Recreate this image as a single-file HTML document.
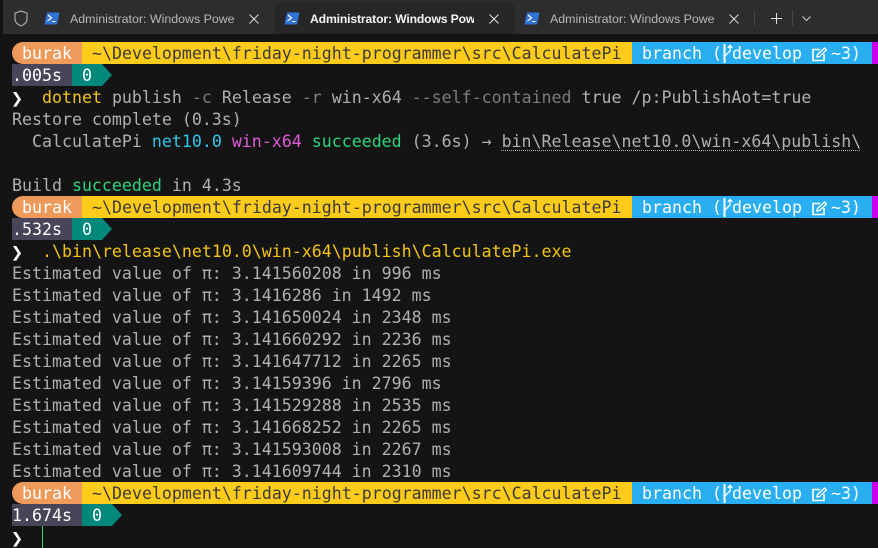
<!DOCTYPE html>
<html><head><meta charset="utf-8">
<style>
html,body{margin:0;padding:0;background:#141414}
#w{position:relative;width:878px;height:548px;overflow:hidden;background:#141414;font-family:"DejaVu Sans Mono","Liberation Mono",monospace;font-size:16.6px;color:#b0b0b0}
.bar{position:absolute;left:0;top:0;width:878px;height:34px;background:#2d2d2d}
.atab{position:absolute;left:275px;top:2px;width:240px;height:32px;background:#272727;border-radius:8px 8px 0 0}
.t{position:absolute;top:11px;height:18px;overflow:hidden;white-space:nowrap;font:12.4px/17px "Liberation Sans",sans-serif;color:#c4c4c4}
.r{position:absolute;height:22px;line-height:24px;white-space:pre}
.s{position:absolute;height:22px;line-height:24px;white-space:pre;overflow:hidden}
.or{background:#ee9a5a;color:#fff;left:12px;width:70px;border-radius:11px 0 0 11px}
.ye{background:#fdcc1a;color:#3c3a3a;left:82px;width:550px}
.bl{background:#29aef2;color:#fff;left:632px;width:240px}
.ma{background:#cc00ee;left:872px;width:6px}
.ti{background:#4a4458;color:#fff;left:12px}
.p{color:#fff;font-weight:bold;font-size:20px;left:11px}
.g{color:#f4c414}.d{color:#7c7c7c}.c{color:#2bc6ee}.m{color:#e05ad8}.n{color:#2cd57c}
.lk{text-decoration:underline dotted #b0b0b0 1px;text-underline-offset:3px}
svg{position:absolute;overflow:visible}
</style></head><body>
<div id="w">
<div class="bar"></div>
<div class="atab"></div>
<svg style="left:14px;top:10px" width="14" height="17" viewBox="0 0 14 17"><path d="M7 1 L13 3 V9 C13 12 10.500 14.500 7 16 C3.500 14.500 1 12 1 9 V3 Z" fill="none" stroke="#a8a8a8" stroke-width="1.200"/></svg>
<svg style="left:44px;top:12px" width="16" height="13" viewBox="0 0 16 13"><path d="M3 0.500 H15.500 L13 12.500 H0.500 Z" fill="#3273d8"/><path d="M4 3 L7.500 6 L3.500 9" fill="none" stroke="#fff" stroke-width="1.200"/><path d="M8 9.500 H11.500" stroke="#fff" stroke-width="1"/></svg>
<div class="t" style="left:70px;width:164px;color:#b8b8b8">Administrator: Windows PowerShell</div>
<svg style="left:249px;top:14px" width="10" height="10" viewBox="0 0 10 10"><path d="M0.500 0.500 L9.500 9.500 M9.500 0.500 L0.500 9.500" stroke="#d8d8d8" stroke-width="1"/></svg>
<svg style="left:284px;top:12px" width="16" height="13" viewBox="0 0 16 13"><path d="M3 0.500 H15.500 L13 12.500 H0.500 Z" fill="#3273d8"/><path d="M4 3 L7.500 6 L3.500 9" fill="none" stroke="#fff" stroke-width="1.200"/><path d="M8 9.500 H11.500" stroke="#fff" stroke-width="1"/></svg>
<div class="t" style="left:310px;width:164px;color:#f4f4f4;font-weight:bold;font-size:12.2px;letter-spacing:-.15px">Administrator: Windows PowerShell</div>
<svg style="left:489px;top:14px" width="10" height="10" viewBox="0 0 10 10"><path d="M0.500 0.500 L9.500 9.500 M9.500 0.500 L0.500 9.500" stroke="#e4e4e4" stroke-width="1"/></svg>
<svg style="left:524px;top:12px" width="16" height="13" viewBox="0 0 16 13"><path d="M3 0.500 H15.500 L13 12.500 H0.500 Z" fill="#3273d8"/><path d="M4 3 L7.500 6 L3.500 9" fill="none" stroke="#fff" stroke-width="1.200"/><path d="M8 9.500 H11.500" stroke="#fff" stroke-width="1"/></svg>
<div class="t" style="left:550px;width:164px;color:#b8b8b8">Administrator: Windows PowerShell</div>
<svg style="left:729px;top:14px" width="10" height="10" viewBox="0 0 10 10"><path d="M0.500 0.500 L9.500 9.500 M9.500 0.500 L0.500 9.500" stroke="#d8d8d8" stroke-width="1"/></svg>
<div style="position:absolute;left:754px;top:10px;width:1px;height:16px;background:#474747"></div>
<svg style="left:771px;top:13px" width="11" height="11" viewBox="0 0 11 11"><path d="M5.500 0 V11 M0 5.500 H11" stroke="#e0e0e0" stroke-width="1"/></svg>
<div style="position:absolute;left:792px;top:10px;width:1px;height:16px;background:#474747"></div>
<svg style="left:802px;top:16px" width="9" height="5" viewBox="0 0 9 5"><path d="M0.500 0.500 L4.500 4.500 L8.500 0.500" fill="none" stroke="#d0d0d0" stroke-width="1"/></svg>

<!-- prompt 1 -->
<div class="s or" style="top:42px"> burak</div>
<div class="s ye" style="top:42px"> ~\Development\friday-night-programmer\src\CalculatePi</div>
<div class="s bl" style="top:42px"> branch (</div>
<div class="r" style="left:732px;top:42px;color:#fff">develop</div>
<div class="r" style="left:831px;top:42px;color:#fff">~3)</div>
<div class="s ma" style="top:42px"></div>
<div class="s ti" style="top:64px;width:60px">.005s</div>
<svg style="left:72px;top:64px" width="40" height="22"><path d="M0 0 H30 L40 11 L30 22 H0 Z" fill="#00897b"/></svg>
<div class="r" style="left:82px;top:64px;color:#fff">0</div>
<div class="r p" style="top:86px">❯</div>
<div class="r" style="left:42px;top:86px"><span class="g">dotnet</span> publish <span class="d">-c</span> Release <span class="d">-r</span> win-x64 <span class="d">--self-contained</span> true /p:PublishAot=true</div>
<div class="r" style="left:12px;top:108px">Restore complete (0.3s)</div>
<div class="r" style="left:12px;top:130px">  CalculatePi <span class="c">net10.0</span> <span class="m">win-x64</span> <span class="n">succeeded</span> (3.6s) → <span class="lk">bin\Release\net10.0\win-x64\publish\</span></div>
<div class="r" style="left:12px;top:174px">Build <span class="n">succeeded</span> in 4.3s</div>

<!-- prompt 2 -->
<div class="s or" style="top:196px"> burak</div>
<div class="s ye" style="top:196px"> ~\Development\friday-night-programmer\src\CalculatePi</div>
<div class="s bl" style="top:196px"> branch (</div>
<div class="r" style="left:732px;top:196px;color:#fff">develop</div>
<div class="r" style="left:831px;top:196px;color:#fff">~3)</div>
<div class="s ma" style="top:196px"></div>
<div class="s ti" style="top:218px;width:60px">.532s</div>
<svg style="left:72px;top:218px" width="40" height="22"><path d="M0 0 H30 L40 11 L30 22 H0 Z" fill="#00897b"/></svg>
<div class="r" style="left:82px;top:218px;color:#fff">0</div>
<div class="r p" style="top:240px">❯</div>
<div class="r g" style="left:42px;top:240px">.\bin\release\net10.0\win-x64\publish\CalculatePi.exe</div>
<div class="r" style="left:12px;top:262px">Estimated value of π: 3.141560208 in 996 ms</div>
<div class="r" style="left:12px;top:284px">Estimated value of π: 3.1416286 in 1492 ms</div>
<div class="r" style="left:12px;top:306px">Estimated value of π: 3.141650024 in 2348 ms</div>
<div class="r" style="left:12px;top:328px">Estimated value of π: 3.141660292 in 2236 ms</div>
<div class="r" style="left:12px;top:350px">Estimated value of π: 3.141647712 in 2265 ms</div>
<div class="r" style="left:12px;top:372px">Estimated value of π: 3.14159396 in 2796 ms</div>
<div class="r" style="left:12px;top:394px">Estimated value of π: 3.141529288 in 2535 ms</div>
<div class="r" style="left:12px;top:416px">Estimated value of π: 3.141668252 in 2265 ms</div>
<div class="r" style="left:12px;top:438px">Estimated value of π: 3.141593008 in 2267 ms</div>
<div class="r" style="left:12px;top:460px">Estimated value of π: 3.141609744 in 2310 ms</div>

<!-- prompt 3 -->
<div class="s or" style="top:482px"> burak</div>
<div class="s ye" style="top:482px"> ~\Development\friday-night-programmer\src\CalculatePi</div>
<div class="s bl" style="top:482px"> branch (</div>
<div class="r" style="left:732px;top:482px;color:#fff">develop</div>
<div class="r" style="left:831px;top:482px;color:#fff">~3)</div>
<div class="s ma" style="top:482px"></div>
<div class="s ti" style="top:504px;width:70px">1.674s</div>
<svg style="left:82px;top:504px" width="40" height="22"><path d="M0 0 H30 L40 11 L30 22 H0 Z" fill="#00897b"/></svg>
<div class="r" style="left:92px;top:504px;color:#fff">0</div>
<div class="r p" style="top:526px">❯</div>
<div style="position:absolute;left:42px;top:526px;width:1px;height:22px;background:#2cd57c"></div>

<!-- branch + edit icons -->
<svg style="left:722px;top:44px" width="11" height="19" viewBox="0 0 11 19"><path d="M2.500 0 V19" stroke="#fff" stroke-width="2"/><path d="M3 12 L8 7 V2 M5.800 4 L8 1.500 L10.300 4" fill="none" stroke="#fff" stroke-width="1.300"/></svg>
<svg style="left:812px;top:47px" width="16" height="15" viewBox="0 0 16 15"><path d="M8 2.500 H1 V13.500 H12 V7" fill="none" stroke="#fff" stroke-width="1.600"/><path d="M5 10 L5.500 7.500 L12.500 1 L14.500 3 L7.500 9.500 Z" fill="none" stroke="#fff" stroke-width="1.300"/></svg>
<svg style="left:722px;top:198px" width="11" height="19" viewBox="0 0 11 19"><path d="M2.500 0 V19" stroke="#fff" stroke-width="2"/><path d="M3 12 L8 7 V2 M5.800 4 L8 1.500 L10.300 4" fill="none" stroke="#fff" stroke-width="1.300"/></svg>
<svg style="left:812px;top:201px" width="16" height="15" viewBox="0 0 16 15"><path d="M8 2.500 H1 V13.500 H12 V7" fill="none" stroke="#fff" stroke-width="1.600"/><path d="M5 10 L5.500 7.500 L12.500 1 L14.500 3 L7.500 9.500 Z" fill="none" stroke="#fff" stroke-width="1.300"/></svg>
<svg style="left:722px;top:484px" width="11" height="19" viewBox="0 0 11 19"><path d="M2.500 0 V19" stroke="#fff" stroke-width="2"/><path d="M3 12 L8 7 V2 M5.800 4 L8 1.500 L10.300 4" fill="none" stroke="#fff" stroke-width="1.300"/></svg>
<svg style="left:812px;top:487px" width="16" height="15" viewBox="0 0 16 15"><path d="M8 2.500 H1 V13.500 H12 V7" fill="none" stroke="#fff" stroke-width="1.600"/><path d="M5 10 L5.500 7.500 L12.500 1 L14.500 3 L7.500 9.500 Z" fill="none" stroke="#fff" stroke-width="1.300"/></svg>
<div style="position:absolute;left:0;top:0;width:3px;height:34px;background:#121212"></div>
</div>
</body></html>
